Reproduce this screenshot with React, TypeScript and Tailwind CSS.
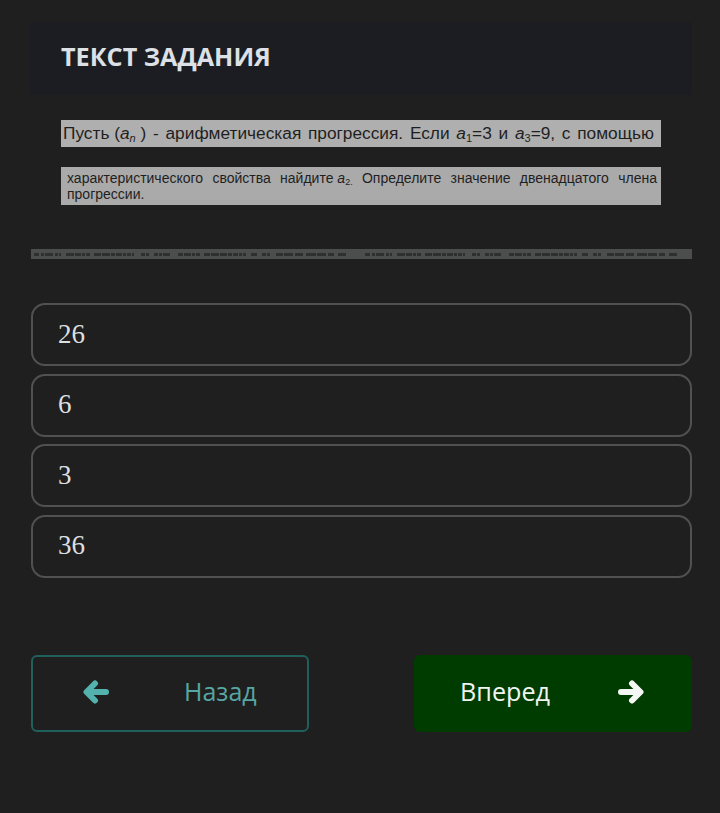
const pattern = [5,2,3,1,8,2,3,1,2,5,8,1,6,1,3,1,4,4,7,1,8,1,4,1,6,1,3,1,4,1,2,7,4,1,3,5,4,1,3,1,7,8,5,1,7,1,3,1,4,4,6,1,8,1,7,1,4,1,5,1,3,1,3,5,6,5,4,1,3,6,7,1,9,2,8,3,10,1,9,2,6,4,8,19];
const segs = [...pattern, ...pattern];

function Strip() {
  return (
    <div className="mt-[44px] ml-[31px] mr-[28px] h-[10px] bg-[#4c4d4d] flex items-center px-[3px] overflow-hidden">
      {segs.map((w, i) => (
        <div key={i} style={{ width: w }} className={i % 2 === 0 ? "h-[3px] shrink-0 bg-[#2e2f2f]" : "h-[3px] shrink-0"} />
      ))}
    </div>
  );
}

function Answer({ t }: { t: string }) {
  return (
    <div className="h-[63px] rounded-[14px] border-2 border-[#505152] flex items-center pl-[25px] pb-[1px] text-[27px] text-[#dcdfe2] [font-family:'Liberation_Serif',serif]">
      {t}
    </div>
  );
}

const Arrow = ({ dir, color }: { dir: "l" | "r"; color: string }) => (
  <svg width="26" height="24" viewBox="0 0 26 24" fill="none" stroke={color} strokeWidth="6" strokeLinecap="round" strokeLinejoin="round">
    {dir === "l" ? <path d="M23 12H4M12 3.500L3.500 12l8.500 8.500" /> : <path d="M3 12h19M14 3.500l8.500 8.500L14 20.500" />}
  </svg>
);

export default function App() {
  return (
    <div className="w-[720px] h-[813px] bg-[#1f1f1f] pt-[22px] overflow-hidden font-['Open_Sans',sans-serif]">
      <div className="ml-[30px] mr-[28px] h-[73px] bg-[#1c1d23] rounded-[3px] flex items-center pl-[31px] pb-[4px] text-[25.200px] font-bold text-[#dde1e6]">
        ТЕКСТ ЗАДАНИЯ
      </div>
      <div className="mt-[25px] ml-[61px] w-[600px] font-['Liberation_Sans',sans-serif] text-[#1f1f1f]">
        <div className="h-[27px] bg-[#afafaf] pl-[2px] pr-[7px] flex items-center justify-between text-[17.300px] leading-none whitespace-nowrap">
          <span>Пусть (<i>a<sub className="text-[11px] leading-none">n</sub></i> )</span>
          <span>-</span>
          <span>арифметическая</span>
          <span>прогрессия.</span>
          <span>Если</span>
          <span><i>a</i><sub className="text-[11px] leading-none">1</sub>=3</span>
          <span>и</span>
          <span><i>a</i><sub className="text-[11px] leading-none">3</sub>=9,</span>
          <span>с</span>
          <span>помощью</span>
        </div>
        <div className="mt-[20px] h-[38px] bg-[#aaaaaa] pl-[6px] pr-[4px] pt-[4px] text-[14px] leading-[15.500px]">
          <div className="flex justify-between whitespace-nowrap">
            <span>характеристического</span>
            <span>свойства</span>
            <span>найдите <i>a</i><sub className="text-[9px] leading-none">2.</sub></span>
            <span>Определите</span>
            <span>значение</span>
            <span>двенадцатого</span>
            <span>члена</span>
          </div>
          <div>прогрессии.</div>
        </div>
      </div>
      <Strip />
      <div className="mt-[44px] ml-[31px] mr-[28px] flex flex-col gap-[7.500px]">
        <Answer t="26" />
        <Answer t="6" />
        <Answer t="3" />
        <Answer t="36" />
      </div>
      <div className="mt-[77px] ml-[31px] mr-[28px] flex justify-between">
        <div className="w-[278px] h-[77px] rounded-[6px] border-2 border-[#1f5f5c] flex items-center pl-[50px] pb-[2px] text-[25px] text-[#56a6a3]">
          <Arrow dir="l" color="#54b2ae" />
          <span className="ml-[75px]">Назад</span>
        </div>
        <div className="w-[278px] h-[77px] rounded-[6px] bg-[#003c00] flex items-center pl-[46px] pb-[2px] text-[25.200px] text-[#f0f5f0]">
          <span>Вперед</span>
          <span className="ml-[68px] flex"><Arrow dir="r" color="#f5f7f5" /></span>
        </div>
      </div>
    </div>
  );
}
